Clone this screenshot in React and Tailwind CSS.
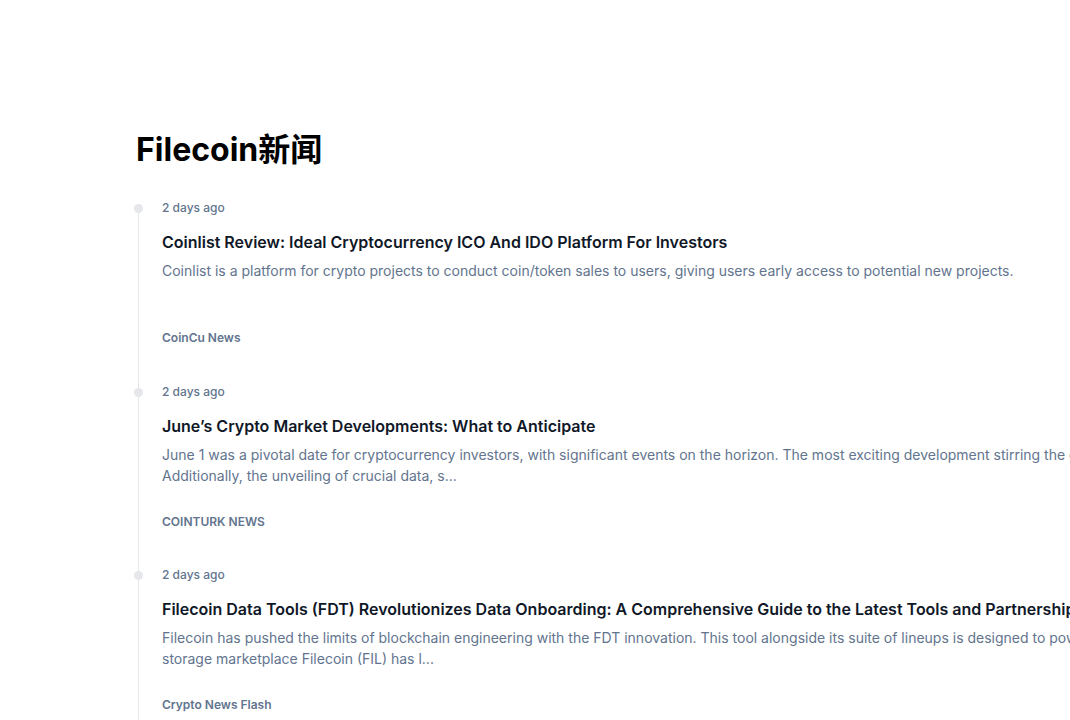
// App.jsx — Filecoin news timeline

const NEWS = [
  {
    time: "2 days ago",
    title: "Coinlist Review: Ideal Cryptocurrency ICO And IDO Platform For Investors",
    lines: [
      "Coinlist is a platform for crypto projects to conduct coin/token sales to users, giving users early access to potential new projects.",
    ],
    source: "CoinCu News",
  },
  {
    time: "2 days ago",
    title: "June’s Crypto Market Developments: What to Anticipate",
    lines: [
      "June 1 was a pivotal date for cryptocurrency investors, with significant events on the horizon. The most exciting development stirring the crypto community was",
      "Additionally, the unveiling of crucial data, s...",
    ],
    source: "COINTURK NEWS",
  },
  {
    time: "2 days ago",
    title:
      "Filecoin Data Tools (FDT) Revolutionizes Data Onboarding: A Comprehensive Guide to the Latest Tools and Partnerships",
    lines: [
      "Filecoin has pushed the limits of blockchain engineering with the FDT innovation. This tool alongside its suite of lineups is designed to power the decentralized",
      "storage marketplace Filecoin (FIL) has l...",
    ],
    source: "Crypto News Flash",
  },
];

function NewsItem({ item, first }) {
  return (
    <li className="flex">
      <div className="flex w-[9px] flex-col items-center">
        <div className={`h-[5px] w-px ${first ? "bg-transparent" : "bg-gray-200"}`} />
        <div className="h-[9px] w-[9px] rounded-full bg-gray-200" />
        <div className="w-px flex-1 bg-gray-200" />
      </div>
      <div className="pl-[19px] pb-[36.5px]">
        <p className="pt-px text-xs leading-4 font-medium text-slate-500">{item.time}</p>
        <h3 className="mt-[14px] whitespace-nowrap text-base leading-6 font-semibold text-gray-900">
          {item.title}
        </h3>
        <p className="mt-[6px] min-h-[42px] whitespace-nowrap text-sm leading-[21px] text-slate-500">
          {item.lines.map((l, i) => (
            <span key={i}>
              {i > 0 && <br />}
              {l}
            </span>
          ))}
        </p>
        <p className="mt-[28px] text-xs leading-4 font-semibold text-slate-500">{item.source}</p>
      </div>
    </li>
  );
}

export default function App() {
  return (
    <div
      className="h-[720px] w-[1070px] overflow-hidden bg-white"
      style={{ fontFamily: 'Inter, "Noto Sans CJK SC", sans-serif' }}
    >
      <div className="pl-[134px] pt-[130px]">
        <h1 className="pl-[2px] text-[32px] leading-10 font-bold text-black">Filecoin新闻</h1>
        <ol className="mt-[29px]">
          {NEWS.map((n, i) => (
            <NewsItem key={i} item={n} first={i === 0} />
          ))}
        </ol>
      </div>
    </div>
  );
}
